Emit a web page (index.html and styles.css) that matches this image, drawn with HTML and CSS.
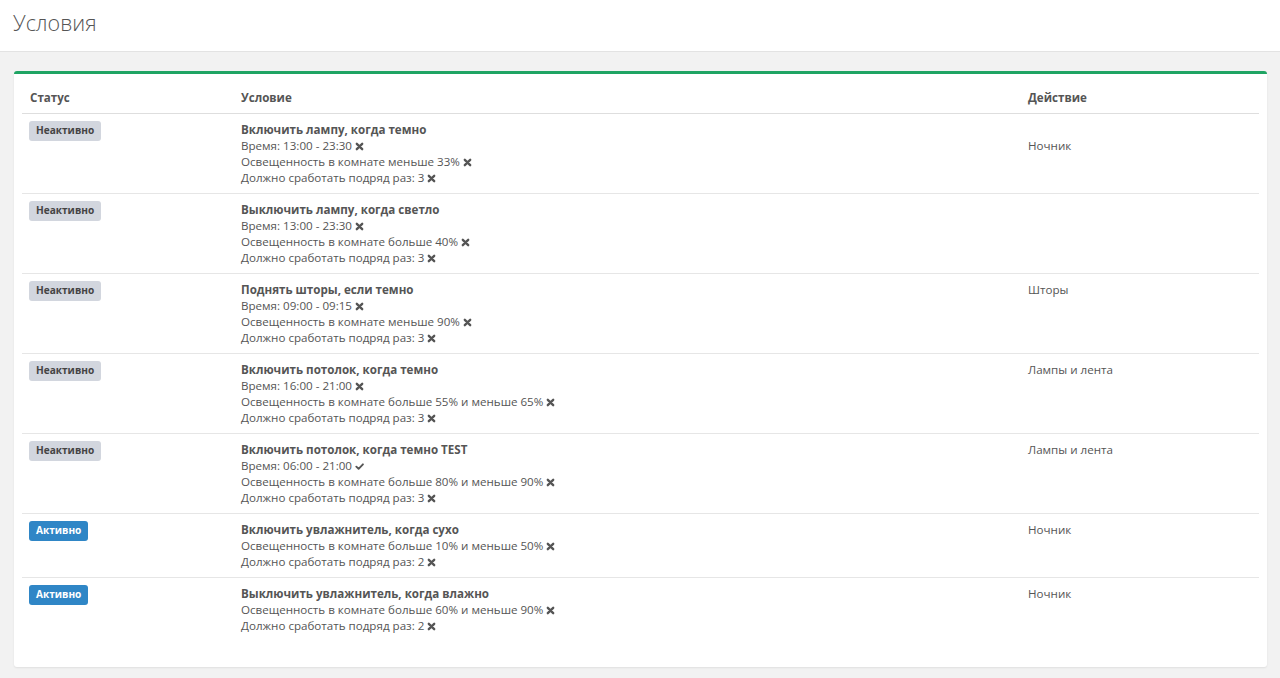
FILE: index.html
```html
<!DOCTYPE html>
<html lang="ru">
<head>
<meta charset="utf-8">
<title>Условия</title>
<link rel="stylesheet" href="styles.css">
</head>
<body>
<header class="page-header"><h1 class="page-title">Условия</h1></header>
<main class="content">
  <section class="box">
    <div class="box-body">
      <table class="table">
        <colgroup><col class="c-status"><col class="c-cond"><col class="c-act"></colgroup>
        <thead>
          <tr><th>Статус</th><th>Условие</th><th>Действие</th></tr>
        </thead>
        <tbody>
          <tr>
            <td><span class="label label-off">Неактивно</span></td>
            <td><div class="t">Включить лампу, когда темно</div>
              <div>Время: 13:00 - 23:30 <svg class="ic" viewBox="0 0 10 10"><path d="M2 2L8 8M8 2L2 8"/></svg></div>
              <div>Освещенность в комнате меньше 33% <svg class="ic" viewBox="0 0 10 10"><path d="M2 2L8 8M8 2L2 8"/></svg></div>
              <div>Должно сработать подряд раз: 3 <svg class="ic" viewBox="0 0 10 10"><path d="M2 2L8 8M8 2L2 8"/></svg></div></td>
            <td><div>&nbsp;</div><div>Ночник</div></td>
          </tr>
          <tr>
            <td><span class="label label-off">Неактивно</span></td>
            <td><div class="t">Выключить лампу, когда светло</div>
              <div>Время: 13:00 - 23:30 <svg class="ic" viewBox="0 0 10 10"><path d="M2 2L8 8M8 2L2 8"/></svg></div>
              <div>Освещенность в комнате больше 40% <svg class="ic" viewBox="0 0 10 10"><path d="M2 2L8 8M8 2L2 8"/></svg></div>
              <div>Должно сработать подряд раз: 3 <svg class="ic" viewBox="0 0 10 10"><path d="M2 2L8 8M8 2L2 8"/></svg></div></td>
            <td></td>
          </tr>
          <tr>
            <td><span class="label label-off">Неактивно</span></td>
            <td><div class="t">Поднять шторы, если темно</div>
              <div>Время: 09:00 - 09:15 <svg class="ic" viewBox="0 0 10 10"><path d="M2 2L8 8M8 2L2 8"/></svg></div>
              <div>Освещенность в комнате меньше 90% <svg class="ic" viewBox="0 0 10 10"><path d="M2 2L8 8M8 2L2 8"/></svg></div>
              <div>Должно сработать подряд раз: 3 <svg class="ic" viewBox="0 0 10 10"><path d="M2 2L8 8M8 2L2 8"/></svg></div></td>
            <td><div>Шторы</div></td>
          </tr>
          <tr>
            <td><span class="label label-off">Неактивно</span></td>
            <td><div class="t">Включить потолок, когда темно</div>
              <div>Время: 16:00 - 21:00 <svg class="ic" viewBox="0 0 10 10"><path d="M2 2L8 8M8 2L2 8"/></svg></div>
              <div>Освещенность в комнате больше 55% и меньше 65% <svg class="ic" viewBox="0 0 10 10"><path d="M2 2L8 8M8 2L2 8"/></svg></div>
              <div>Должно сработать подряд раз: 3 <svg class="ic" viewBox="0 0 10 10"><path d="M2 2L8 8M8 2L2 8"/></svg></div></td>
            <td><div>Лампы и лента</div></td>
          </tr>
          <tr>
            <td><span class="label label-off">Неактивно</span></td>
            <td><div class="t">Включить потолок, когда темно TEST</div>
              <div>Время: 06:00 - 21:00 <svg class="ic ok" viewBox="0 0 10 10"><path d="M1.5 5.2L4 7.6L8.8 2.6"/></svg></div>
              <div>Освещенность в комнате больше 80% и меньше 90% <svg class="ic" viewBox="0 0 10 10"><path d="M2 2L8 8M8 2L2 8"/></svg></div>
              <div>Должно сработать подряд раз: 3 <svg class="ic" viewBox="0 0 10 10"><path d="M2 2L8 8M8 2L2 8"/></svg></div></td>
            <td><div>Лампы и лента</div></td>
          </tr>
          <tr>
            <td><span class="label label-on">Активно</span></td>
            <td><div class="t">Включить увлажнитель, когда сухо</div>
              <div>Освещенность в комнате больше 10% и меньше 50% <svg class="ic" viewBox="0 0 10 10"><path d="M2 2L8 8M8 2L2 8"/></svg></div>
              <div>Должно сработать подряд раз: 2 <svg class="ic" viewBox="0 0 10 10"><path d="M2 2L8 8M8 2L2 8"/></svg></div></td>
            <td><div>Ночник</div></td>
          </tr>
          <tr>
            <td><span class="label label-on">Активно</span></td>
            <td><div class="t">Выключить увлажнитель, когда влажно</div>
              <div>Освещенность в комнате больше 60% и меньше 90% <svg class="ic" viewBox="0 0 10 10"><path d="M2 2L8 8M8 2L2 8"/></svg></div>
              <div>Должно сработать подряд раз: 2 <svg class="ic" viewBox="0 0 10 10"><path d="M2 2L8 8M8 2L2 8"/></svg></div></td>
            <td><div>Ночник</div></td>
          </tr>
        </tbody>
      </table>
    </div>
  </section>
</main>
</body>
</html>
```
FILE: styles.css
```css
html, body {
  margin: 0;
  padding: 0;
}
body {
  background: #f2f2f2;
  font-family: "Open Sans", "DejaVu Sans", sans-serif;
  font-size: 11.6px;
  line-height: 16px;
  color: #555;
  height: 678px;
  overflow: hidden;
}
.page-header {
  background: #fff;
  height: 52px;
  border-bottom: 1px solid #e3e3e3;
  box-sizing: border-box;
  padding: 9px 13px 0;
}
.page-title {
  margin: 0;
  font-size: 21.5px;
  line-height: 28px;
  font-weight: 300;
  color: #555;
}
.content {
  padding: 19px 13px 0 14px;
}
.box {
  background: #fff;
  border-top: 3px solid #1fa463;
  border-radius: 3px;
  box-shadow: 0 1px 2px rgba(0, 0, 0, 0.08);
}
.box-body {
  padding: 8px 8px 8px;
}
.table {
  width: 100%;
  border-collapse: collapse;
  margin-bottom: 18px;
}
.c-status { width: 211px; }
.c-act { width: 239px; }
.table th {
  text-align: left;
  font-weight: 700;
  color: #555;
  padding: 8px 8px 7px;
  border-bottom: 1px solid #dedede;
}
.table td {
  vertical-align: top;
  padding: 8px 8px 7px;
  border-top: 1px solid #e6e6e6;
}
.table tbody tr:first-child td {
  border-top: 0;
}
.t {
  font-weight: 700;
}
.label {
  display: inline-block;
  margin-top: -2px;
  margin-left: -1px;
  padding: 3px 7px 4px;
  font-size: 10.1px;
  line-height: 13px;
  font-weight: 700;
  border-radius: 3px;
}
.label-off {
  background: #d2d6de;
  color: #444;
}
.label-on {
  background: #2f86c6;
  color: #fff;
}
.ic {
  width: 9px;
  height: 9px;
  vertical-align: -1px;
  fill: none;
  stroke: #555;
  stroke-width: 2.6;
  stroke-linecap: round;
}
.ic.ok {
  stroke-width: 2.1;
  stroke-linejoin: round;
}
```
